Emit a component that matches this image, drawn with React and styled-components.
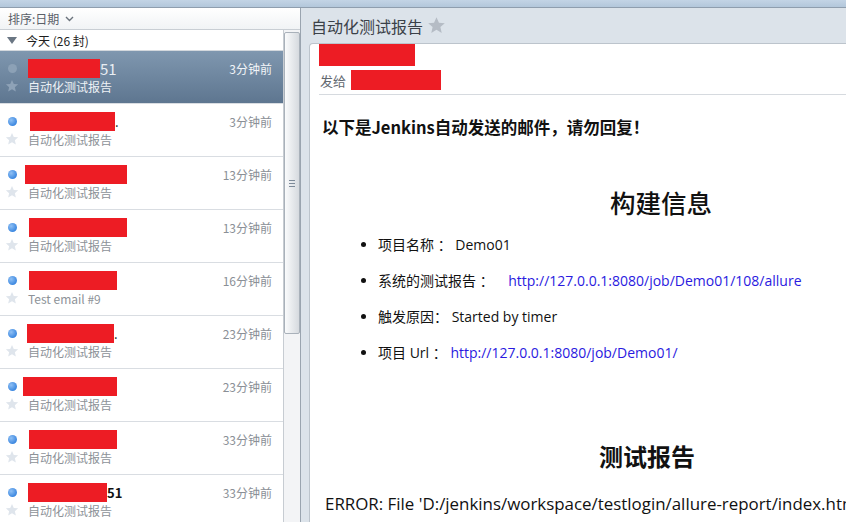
import React from "react";
import styled, { createGlobalStyle } from "styled-components";

const GlobalStyle = createGlobalStyle`
  html, body {
    margin: 0;
    padding: 0;
    overflow: hidden;
    background: #ffffff;
  }
  body {
    font-family: "Noto Sans CJK SC", "Noto Sans", sans-serif;
  }
`;

const mails = [
  { sender: 72, shift: 0, tail: "51", time: "3分钟前", subject: "自动化测试报告", selected: true },
  { sender: 85, shift: 2, tail: ".", time: "3分钟前", subject: "自动化测试报告" },
  { sender: 102, shift: -3, time: "13分钟前", subject: "自动化测试报告" },
  { sender: 98, shift: 1, time: "13分钟前", subject: "自动化测试报告" },
  { sender: 88, shift: 1, time: "16分钟前", subject: "Test email #9" },
  { sender: 87, shift: -1, tail: ".", time: "23分钟前", subject: "自动化测试报告" },
  { sender: 94, shift: -5, time: "23分钟前", subject: "自动化测试报告" },
  { sender: 88, shift: 1, time: "33分钟前", subject: "自动化测试报告" },
  { sender: 79, shift: 0, tail: "51", bold: true, time: "33分钟前", subject: "自动化测试报告" },
];

const Star = ({ color, size = 14 }) => (
  <svg width={size} height={size} viewBox="0 0 24 24">
    <path
      d="M12 1.5l3.1 7 7.4.6-5.6 4.9 1.7 7.4L12 17.5l-6.6 3.9 1.7-7.4L1.5 9.1l7.4-.6z"
      fill={color}
    />
  </svg>
);

export default function App() {
  return (
    <>
      <GlobalStyle />
      <Window>
        <TopStrip />
        <Main>
          <LeftPane>
            <SortBar>
              排序:日期
              <svg width="9" height="6" viewBox="0 0 9 6">
                <path d="M1 1l3.5 3.5L8 1" stroke="#6b737c" strokeWidth="1.4" fill="none" />
              </svg>
            </SortBar>
            <ListWrap>
              <List>
                <GroupHeader>
                  <Triangle />
                  今天 (26 封)
                </GroupHeader>
                {mails.map((m, i) => (
                  <Row key={i} $selected={m.selected}>
                    <IconCell>
                      <Dot $selected={m.selected} />
                    </IconCell>
                    <Sender $selected={m.selected} $bold={m.bold}>
                      <Redact style={{ width: m.sender, marginLeft: m.shift }} />
                      {m.tail && <span>{m.tail}</span>}
                    </Sender>
                    <Time $selected={m.selected}>{m.time}</Time>
                    <IconCell>
                      <Star color={m.selected ? "#8ea2b7" : "#dfe5ec"} />
                    </IconCell>
                    <Subject $selected={m.selected}>{m.subject}</Subject>
                  </Row>
                ))}
              </List>
              <ScrollTrack>
                <Thumb>
                  <Grip>
                    <i />
                    <i />
                    <i />
                  </Grip>
                </Thumb>
              </ScrollTrack>
            </ListWrap>
          </LeftPane>
          <RightPane>
            <TitleBar>
              自动化测试报告
              <Star color="#b5bcc5" size={19} />
            </TitleBar>
            <Card>
              <CardHead>
                <Redact style={{ width: 96, height: 23 }} />
                <ToLine>
                  发给
                  <Redact style={{ width: 90, height: 20 }} />
                </ToLine>
              </CardHead>
              <MailBody>
                <Notice>以下是Jenkins自动发送的邮件，请勿回复！</Notice>
                <SectionTitle $indent={288}>构建信息</SectionTitle>
                <InfoList>
                  <li>项目名称 ： Demo01</li>
                  <li>
                    系统的测试报告 ：&nbsp;&nbsp;&nbsp; <a href="#r">http://127.0.0.1:8080/job/Demo01/108/allure</a>
                  </li>
                  <li>触发原因： Started by timer</li>
                  <li>
                    项目 Url ： <a href="#u">http://127.0.0.1:8080/job/Demo01/</a>
                  </li>
                </InfoList>
                <SectionTitle $indent={277} $bold>测试报告</SectionTitle>
                <ErrorLine>ERROR: File 'D:/jenkins/workspace/testlogin/allure-report/index.html' not found</ErrorLine>
              </MailBody>
            </Card>
          </RightPane>
        </Main>
      </Window>
    </>
  );
}

const Window = styled.div`
  width: 846px;
  height: 522px;
  display: flex;
  flex-direction: column;
  overflow: hidden;
`;

const TopStrip = styled.div`
  height: 7px;
  flex: none;
  background: linear-gradient(#c3d4e5, #b3c7db);
  border-bottom: 1px solid #8f9eae;
`;

const Main = styled.div`
  flex: 1;
  min-height: 0;
  display: grid;
  grid-template-columns: 300px 1fr;
`;

const LeftPane = styled.div`
  display: flex;
  flex-direction: column;
  min-height: 0;
  background: #ffffff;
`;

const SortBar = styled.div`
  height: 21px;
  flex: none;
  display: flex;
  align-items: center;
  gap: 6px;
  padding-left: 8px;
  font-size: 12px;
  color: #5a6068;
  background: linear-gradient(#ffffff, #f1f3f5);
  border-bottom: 1px solid #c9ced4;
`;

const ListWrap = styled.div`
  flex: 1;
  min-height: 0;
  display: grid;
  grid-template-columns: 284px 16px;
`;

const List = styled.div`
  border-right: 1px solid #c7ccd2;
  overflow: hidden;
`;

const GroupHeader = styled.div`
  height: 20px;
  display: flex;
  align-items: center;
  gap: 9px;
  padding-left: 7px;
  font-size: 12px;
  color: #1e1e1e;
  border-bottom: 1px solid #d3d8dd;
`;

const Triangle = styled.span`
  width: 0;
  height: 0;
  border-left: 5px solid transparent;
  border-right: 5px solid transparent;
  border-top: 7px solid #6a7683;
`;

const Row = styled.div`
  display: grid;
  grid-template-columns: 24px 1fr auto;
  grid-template-rows: 18px 18px;
  column-gap: 4px;
  padding: 8px 11px 8px 0;
  border-bottom: 1px solid #d9dde2;
  background: ${({ $selected }) =>
    $selected ? "linear-gradient(#7f97af, #5e7690)" : "#ffffff"};
`;

const IconCell = styled.div`
  display: flex;
  align-items: center;
  justify-content: center;
`;

const Dot = styled.span`
  width: 9px;
  height: 9px;
  border-radius: 50%;
  background: ${({ $selected }) =>
    $selected
      ? "#8ca1b6"
      : "radial-gradient(circle at 35% 35%, #8fc0f5, #3d88e0 70%)"};
`;

const Sender = styled.div`
  display: flex;
  align-items: center;
  font-size: ${({ $selected }) => ($selected ? "15px" : "13px")};
  font-weight: ${({ $bold }) => ($bold ? 700 : 400)};
  color: ${({ $selected }) => ($selected ? "#e9eef3" : "#111111")};
  line-height: 1;
`;

const Redact = styled.span`
  display: block;
  height: 19px;
  background: #ed1c24;
  flex: none;
`;

const Time = styled.div`
  display: flex;
  align-items: center;
  font-size: 12px;
  color: ${({ $selected }) => ($selected ? "#f2f5f8" : "#8a8f96")};
`;

const Subject = styled.div`
  grid-column: 2 / 4;
  display: flex;
  align-items: center;
  font-size: 12px;
  color: ${({ $selected }) => ($selected ? "#eef2f6" : "#8d9298")};
`;

const ScrollTrack = styled.div`
  background: #f3f4f6;
  padding-top: 2px;
`;

const Thumb = styled.div`
  height: 302px;
  box-sizing: border-box;
  border: 1px solid #a9b1ba;
  border-radius: 2px;
  background: linear-gradient(90deg, #fafbfc, #d6dadf);
  display: flex;
  align-items: center;
  justify-content: center;
`;

const Grip = styled.div`
  display: flex;
  flex-direction: column;
  gap: 2px;
  i {
    display: block;
    width: 6px;
    height: 1px;
    background: #7d8a99;
  }
`;

const RightPane = styled.div`
  display: flex;
  flex-direction: column;
  min-height: 0;
  overflow: hidden;
  background: #dce3ea;
  border-left: 1px solid #9aa4af;
`;

const TitleBar = styled.div`
  height: 35px;
  flex: none;
  display: flex;
  align-items: center;
  gap: 4px;
  padding-left: 10px;
  font-size: 16px;
  color: #3b4148;
`;

const Card = styled.div`
  flex: 1;
  margin-left: 8px;
  margin-right: -20px;
  background: #ffffff;
  border: 1px solid #bcc4cc;
  border-bottom: none;
  border-radius: 4px 0 0 0;
  overflow: hidden;
`;

const CardHead = styled.div`
  display: flex;
  flex-direction: column;
  align-items: stretch;
  padding-left: 9px;
  margin-top: -1px;
  & > span {
    align-self: flex-start;
  }
`;

const ToLine = styled.div`
  height: 28px;
  display: flex;
  align-items: center;
  gap: 5px;
  padding-left: 1px;
  font-size: 13px;
  color: #62686f;
  border-bottom: 1px solid #d6dadf;
`;

const MailBody = styled.div`
  padding: 21px 0 0 12px;
  font-family: "Open Sans", "Noto Sans CJK SC", sans-serif;
  color: #111111;
`;

const Notice = styled.div`
  font-size: 16.5px;
  font-weight: 700;
  line-height: 22px;
  font-family: "Noto Sans CJK SC", sans-serif;
`;

const SectionTitle = styled.div`
  padding-left: ${({ $indent }) => $indent}px;
  margin-top: ${({ $bold }) => ($bold ? "62px" : "49px")};
  font-size: ${({ $bold }) => ($bold ? "24px" : "25.5px")};
  line-height: 30px;
  font-weight: ${({ $bold }) => ($bold ? 700 : 500)};
  font-family: "Noto Sans CJK SC", sans-serif;
`;

const InfoList = styled.ul`
  margin: 18px 0 0;
  padding-left: 56px;
  font-size: 14px;
  li {
    height: 36px;
    line-height: 20px;
  }
  a {
    color: #2a1ae0;
    text-decoration: none;
  }
`;

const ErrorLine = styled.div`
  margin-top: 21px;
  padding-left: 3px;
  font-size: 16.9px;
  line-height: 24px;
  white-space: nowrap;
`;
